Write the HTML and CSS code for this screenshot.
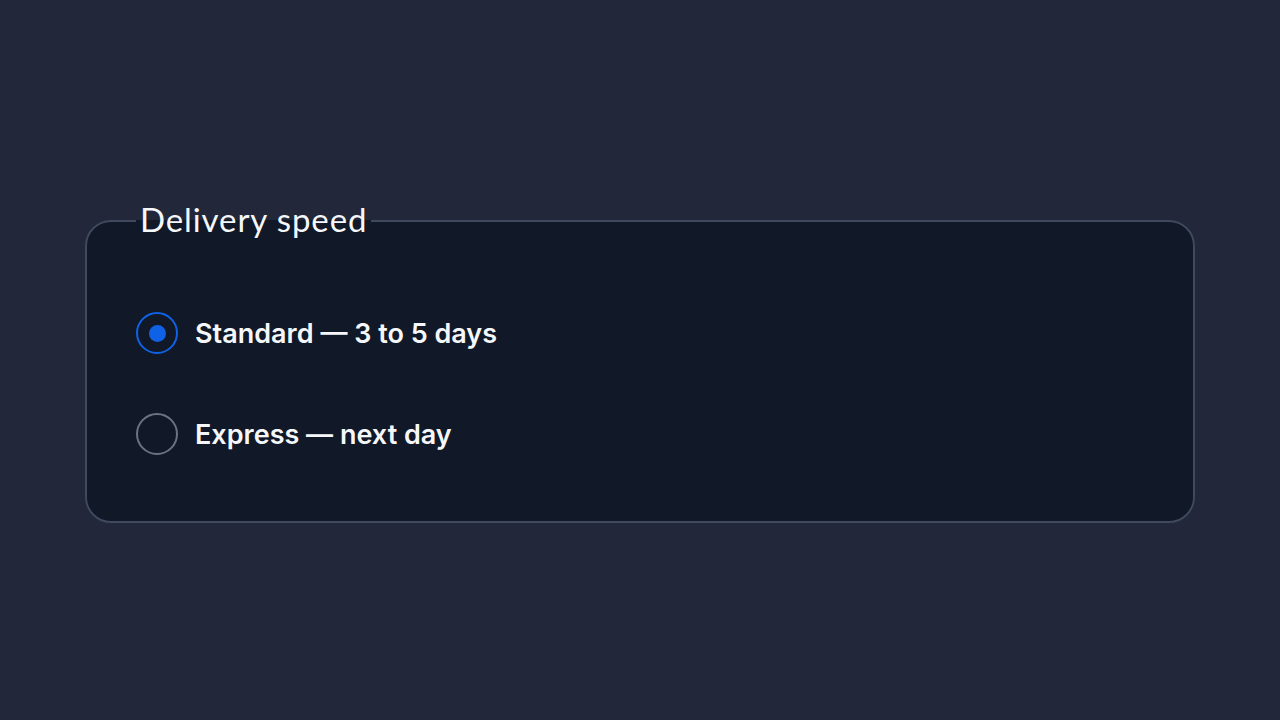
FILE: index.html
```html
<!DOCTYPE html>
<html lang="en">
<head>
<meta charset="utf-8">
<title>Delivery speed</title>
<link rel="stylesheet" href="styles.css">
</head>
<body>
<form class="page">
  <fieldset class="group">
    <legend class="group-title">Delivery speed</legend>
    <div class="options">
      <label class="option">
        <input class="radio" type="radio" name="speed" checked>
        <span class="option-text">Standard — 3 to 5 days</span>
      </label>
      <label class="option">
        <input class="radio" type="radio" name="speed">
        <span class="option-text">Express — next day</span>
      </label>
    </div>
  </fieldset>
</form>
</body>
</html>
```
FILE: styles.css
```css
html, body {
  margin: 0;
  padding: 0;
  background: #222839;
  height: 100%;
}
.page {
  padding: 201px 85px 0;
  margin: 0;
}
.group {
  margin: 0;
  border: 2px solid #3f4a5e;
  border-radius: 26px;
  background: #111827;
  padding: 71px 49px 66px;
  min-width: 0;
}
.group-title {
  padding: 0 4px 4px;
  font-family: "Lato", "Open Sans", sans-serif;
  font-weight: 400;
  font-size: 33px;
  letter-spacing: 0.9px;
  line-height: 36px;
  color: #f5f7fb;
}
.options {
  display: flex;
  flex-direction: column;
  gap: 59px;
}
.option {
  display: flex;
  align-items: center;
  gap: 17px;
  height: 42px;
  cursor: pointer;
}
.radio {
  appearance: none;
  -webkit-appearance: none;
  margin: 0;
  width: 42px;
  height: 42px;
  box-sizing: border-box;
  border: 2px solid #6b7383;
  border-radius: 50%;
  display: grid;
  place-items: center;
  flex: none;
}
.radio:checked {
  border-color: #0f62e6;
}
.radio:checked::before {
  content: "";
  width: 17px;
  height: 17px;
  border-radius: 50%;
  background: #0f62e6;
}
.option-text {
  font-family: "Inter", "Lato", sans-serif;
  font-weight: 600;
  font-size: 27px;
  color: #f5f7fb;
}
```
